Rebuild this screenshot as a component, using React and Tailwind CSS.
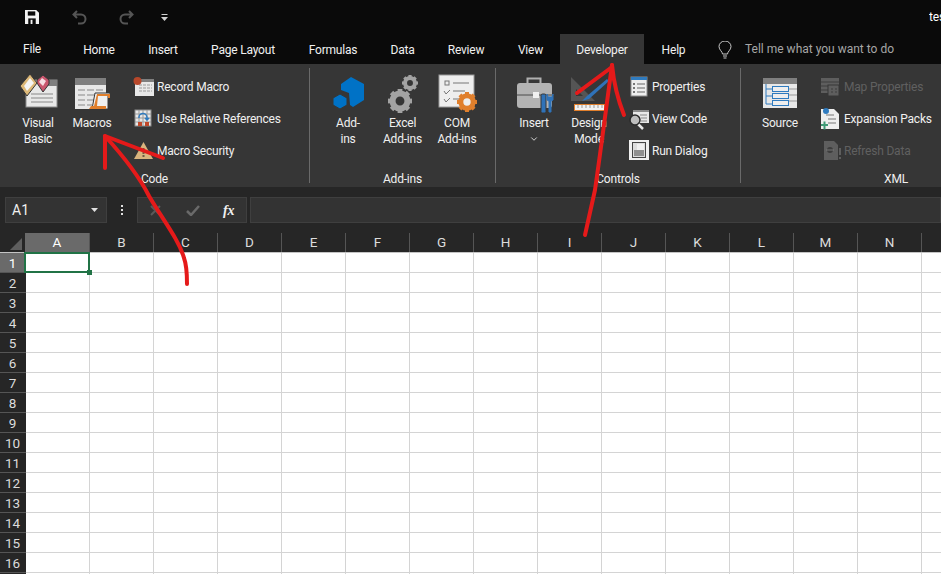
import React from 'react';
import { ChevronDown } from 'lucide-react';

const Gear = ({ cx, cy, r, fill }) => (
  <g>
    <circle cx={cx} cy={cy} r={r * 0.62} fill="none" stroke={fill} strokeWidth={r * 0.5} />
    {[0, 45, 90, 135, 180, 225, 270, 315].map(a => (
      <rect
        key={a}
        x={cx - r * 0.2}
        y={cy - r}
        width={r * 0.4}
        height={r * 0.4}
        fill={fill}
        transform={`rotate(${a} ${cx} ${cy})`}
      />
    ))}
  </g>
);

const BigSvg = ({ children }) => (
  <svg width="44" height="42" viewBox="0 0 44 42">{children}</svg>
);

const SmallSvg = ({ children }) => (
  <svg width="22" height="22" viewBox="0 0 22 22">{children}</svg>
);

const VisualBasicIcon = () => (
  <BigSvg>
    <rect x="10" y="8" width="31" height="27" fill="#e8e8e8" stroke="#8c8c8c" />
    <rect x="28" y="8" width="13" height="6" fill="#7f7f7f" />
    <path d="M15 22h22M15 26h22M15 30h22" stroke="#a8a8a8" strokeWidth="1.500" />
    <path d="M14 2l7 9-10 13-7-10z" fill="#dcb878" stroke="#363636" />
    <path d="M14 6l4 5-7 8-3-5z" fill="#f4f4f4" />
    <path d="M27 3l6 5v4l-6 8-6-9V8z" fill="#c9566e" stroke="#363636" />
    <path d="M26 6l4 3-3 5-4-4z" fill="#f5dce2" />
  </BigSvg>
);

const MacrosIcon = () => (
  <BigSvg>
    <rect x="5" y="6" width="31" height="31" fill="#e8e8e8" />
    <rect x="5" y="6" width="31" height="7" fill="#7f7f7f" />
    <path d="M8 18h25M8 23h25M8 28h16M8 33h14" stroke="#a8a8a8" strokeWidth="1.500" strokeDasharray="7 2" />
    <path d="M25 21h15v3h-2v13H22z" fill="#f0f0f0" stroke="#363636" strokeWidth="1" />
    <path d="M27 22h13v4h-2v-2h-10l-1 10h9v3H19l2-3h3z" fill="#e07f2c" />
  </BigSvg>
);

const RecordIcon = () => (
  <SmallSvg>
    <rect x="2" y="3" width="19" height="17" fill="#e8e8e8" />
    <rect x="2" y="3" width="19" height="3" fill="#7f7f7f" />
    <path d="M6 9h13M6 12h13M6 15h13" stroke="#9a9a9a" strokeDasharray="3 1" />
    <circle cx="4.500" cy="5" r="4" fill="#b7472a" />
  </SmallSvg>
);

const RelativeIcon = () => (
  <SmallSvg>
    <rect x="2" y="2" width="16" height="16" fill="#e8e8e8" stroke="#8c8c8c" />
    <path d="M6 2v16M10 2v16M14 2v16M2 6h16M2 10h16M2 14h16" stroke="#9a9a9a" />
    <rect x="5" y="14" width="4" height="4" fill="#c0482a" />
    <rect x="12" y="14" width="4" height="4" fill="#c0482a" />
    <path d="M6 10a4 4 0 0 1 8-1v3m-2-2l2 2 2-2" fill="none" stroke="#2f7bbf" strokeWidth="1.500" />
  </SmallSvg>
);

const SecurityIcon = () => (
  <SmallSvg>
    <path d="M10.500 2L20 19H1z" fill="#d8b47e" />
    <rect x="9.500" y="8" width="2" height="6" fill="#6b5a44" />
    <rect x="9.500" y="15" width="2" height="2" fill="#6b5a44" />
  </SmallSvg>
);

const AddinsIcon = () => (
  <BigSvg>
    <path d="M25 5l13 7v16l-11 7-3-2-1-12-8-3V12z" fill="#0072c6" />
    <path d="M14 22l7 4v7l-7 4-7-4v-7z" fill="#0072c6" stroke="#363636" />
  </BigSvg>
);

const ExcelAddinsIcon = () => (
  <BigSvg>
    <Gear cx={29} cy={11} r={8} fill="#a3a3a3" />
    <Gear cx={19} cy={29} r={12} fill="#a3a3a3" />
  </BigSvg>
);

const ComIcon = () => (
  <BigSvg>
    <rect x="4" y="3" width="35" height="32" fill="#eeeeee" stroke="#9a9a9a" />
    <rect x="10" y="9" width="4" height="4" fill="none" stroke="#777" />
    <path d="M18 11h16M18 19h12M18 27h8" stroke="#777" />
    <path d="M9 19l2 3 4-4M9 27l2 3 4-4" fill="none" stroke="#777" />
    <Gear cx={32} cy={30} r={10} fill="#e07f2c" />
  </BigSvg>
);

const InsertIcon = () => (
  <BigSvg>
    <path d="M15.500 11V6.500h13V11" fill="none" stroke="#b0b0b0" strokeWidth="2" />
    <rect x="5" y="11" width="35" height="25" rx="3" fill="#b3b3b3" />
    <path d="M5 23h16M27 23h13" stroke="#4a4a4a" />
    <rect x="21" y="20" width="6" height="6" fill="#f0f0f0" />
    <rect x="29" y="22" width="5" height="19" rx="1.500" fill="#2f72b8" stroke="#363636" />
    <path d="M35 22v6l2 1v11h2V29l2-1v-6l-1 3h-4z" fill="#2f72b8" stroke="#2f72b8" />
  </BigSvg>
);

const DesignIcon = () => (
  <BigSvg>
    <path d="M4 5l24 24H4zM9 17v7h7z" fill="#555" fillRule="evenodd" />
    <path d="M40 7L20 24l-5 5 7-2 20-18z" fill="#2f72b8" />
    <rect x="7.500" y="32.500" width="30" height="6" fill="#f2f2f2" stroke="#e07f2c" />
    <path d="M11 33v3M15 33v3M19 33v3M23 33v3M27 33v3M31 33v3M35 33v3" stroke="#999" />
  </BigSvg>
);

const PropertiesIcon = () => (
  <SmallSvg>
    <rect x="3" y="1" width="16" height="19" fill="#eeeeee" stroke="#8c8c8c" />
    <rect x="3" y="1" width="16" height="3" fill="#2f7bbf" />
    <path d="M9 8h8M9 12h8M9 16h8" stroke="#666" />
    <rect x="5" y="7" width="2" height="2" fill="#777" />
    <rect x="5" y="11" width="2" height="2" fill="#777" />
    <rect x="5" y="15" width="2" height="2" fill="#777" />
  </SmallSvg>
);

const ViewCodeIcon = () => (
  <SmallSvg>
    <rect x="5" y="2" width="16" height="13" fill="#e8e8e8" />
    <rect x="5" y="2" width="16" height="2" fill="#8c8c8c" />
    <path d="M12 7h7M13 10h6M13 13h6" stroke="#888" />
    <path d="M10 16l5 5" stroke="#e8e8e8" strokeWidth="2.500" />
    <circle cx="7" cy="12" r="5" fill="#bdbdbd" stroke="#2a2a2a" strokeWidth="1.500" />
  </SmallSvg>
);

const RunDialogIcon = () => (
  <SmallSvg>
    <rect x="1" y="0" width="20" height="20" fill="#efefef" />
    <rect x="4.500" y="2.500" width="13" height="15" fill="#dcdcdc" stroke="#444" />
    <rect x="9" y="4" width="7" height="6" fill="#efefef" />
    <rect x="6" y="10" width="10" height="6" fill="#8f8f8f" />
  </SmallSvg>
);

const SourceIcon = () => (
  <BigSvg>
    <rect x="5" y="6" width="34" height="30" fill="#e8e8e8" />
    <rect x="5" y="6" width="34" height="6" fill="#7f7f7f" />
    <path d="M31 17h8M31 23h8M31 29h8" stroke="#999" />
    <path d="M8 12v20h6M8 17h6M8 24h6" fill="none" stroke="#2f7bbf" />
    <rect x="14.500" y="14.500" width="16" height="5" fill="#eeeeee" stroke="#2f7bbf" />
    <rect x="14.500" y="21.500" width="16" height="5" fill="#eeeeee" stroke="#2f7bbf" />
    <rect x="14.500" y="28.500" width="16" height="5" fill="#eeeeee" stroke="#2f7bbf" />
  </BigSvg>
);

const MapPropsIcon = () => (
  <SmallSvg>
    <rect x="1" y="2" width="18" height="15" fill="#5e5e5e" />
    <path d="M1 6h18M1 10h8M1 14h8" stroke="#3d3d3d" />
    <rect x="8" y="9" width="11" height="11" fill="#5e5e5e" stroke="#363636" />
    <path d="M11 13h2M15 13h2M11 16h2M15 16h2" stroke="#3d3d3d" />
  </SmallSvg>
);

const ExpansionIcon = () => (
  <SmallSvg>
    <path d="M1 1h13l5 5v15H1z" fill="#eeeeee" />
    <path d="M6 7h8M8 11h8M8 15h8" stroke="#777" />
    <circle cx="6" cy="3" r="3" fill="#2f7bbf" />
    <path d="M1 17h7M4.500 13.500v8" stroke="#3f9a76" strokeWidth="2" />
  </SmallSvg>
);

const RefreshIcon = () => (
  <SmallSvg>
    <path d="M4 1h10l4 4v15H4z" fill="#5e5e5e" />
    <circle cx="10" cy="10" r="3" fill="#3d3d3d" />
    <path d="M6 10h8" stroke="#777" />
    <rect x="19" y="8" width="2" height="7" fill="#5e5e5e" />
    <rect x="19" y="17" width="2" height="2" fill="#5e5e5e" />
  </SmallSvg>
);

const BigBtn = ({ icon, lines, className }) => (
  <div className={`flex flex-col items-center text-[#f0f0f0] leading-[16px] ${className}`}>
    <div className="h-[43px] flex justify-center">{icon}</div>
    {lines.map(l => (
      <div key={l} className="whitespace-nowrap">{l}</div>
    ))}
  </div>
);

const SmallBtn = ({ icon, label, dim }) => (
  <div className={`h-8 flex items-center whitespace-nowrap ${dim ? 'text-[#606060]' : 'text-[#f0f0f0]'}`}>
    <div className="w-6 shrink-0 flex">{icon}</div>
    {label}
  </div>
);

const Group = ({ label, className, pad, last, children }) => (
  <div className={`shrink-0 h-full flex ${className}`}>
    <div className="flex-1 flex flex-col">
      <div className={`flex-1 flex pt-2 ${pad}`}>{children}</div>
      <div className="h-4 text-center text-[#f0f0f0] leading-[16px]">{label}</div>
    </div>
    {!last && <div className="w-px my-1 bg-[#6a6a6a]" />}
  </div>
);

const tabs = [
  ['Home', 'w-[66px]'],
  ['Insert', 'w-[62px]'],
  ['Page Layout', 'w-[98px]'],
  ['Formulas', 'w-[82px]'],
  ['Data', 'w-[57px]'],
  ['Review', 'w-[70px]'],
  ['View', 'w-[59px]'],
];

const columns = ['A', 'B', 'C', 'D', 'E', 'F', 'G', 'H', 'I', 'J', 'K', 'L', 'M', 'N', 'O'];
const rows = Array.from({ length: 17 }, (_, i) => i + 1);

export default function App() {
  return (
    <div className="relative w-[941px] h-[574px] overflow-hidden bg-white text-[12px] tracking-[-0.2px] font-['Roboto',sans-serif]">
      {/* Title bar */}
      <div className="h-[34px] bg-[#0a0a0a] flex items-center text-white">
        <div className="w-[72px] pl-[25px] flex">
          <svg width="14" height="14" viewBox="0 0 15 15">
            <path d="M0 0h12l3 3v12H0z" fill="#f2f2f2" />
            <rect x="3" y="1.500" width="8" height="4.500" fill="#0a0a0a" />
            <rect x="3.500" y="9" width="8" height="6" fill="#0a0a0a" />
            <rect x="6" y="10.500" width="2" height="4.500" fill="#f2f2f2" />
          </svg>
        </div>
        <div className="w-[47px] flex">
          <svg width="15" height="15" viewBox="0 0 15 15" fill="none" stroke="#555" strokeWidth="2">
            <path d="M5 1L1.500 4.500 5 8M2 4.500h7a4.500 4.500 0 0 1 0 9H6" />
          </svg>
        </div>
        <div className="w-[42px] flex">
          <svg width="15" height="15" viewBox="0 0 15 15" fill="none" stroke="#555" strokeWidth="2">
            <path d="M10 1l3.500 3.500L10 8M13 4.500H6a4.500 4.500 0 0 0 0 9h3" />
          </svg>
        </div>
        <svg width="7" height="7" viewBox="0 0 7 7" fill="#d0d0d0">
          <rect x="0.500" y="0" width="6" height="1" />
          <path d="M0 3h7L3.500 7z" />
        </svg>
        <div className="ml-auto w-[12px] overflow-hidden whitespace-nowrap">test</div>
      </div>

      {/* Tabs */}
      <div className="h-[30px] bg-[#0a0a0a] flex items-stretch text-[#f0f0f0]">
        <div className="w-[66px] pl-[23px] pt-[6px] leading-[18px]">File</div>
        {tabs.map(([name, w]) => (
          <div key={name} className={`${w} text-center pt-[7px] leading-[18px]`}>{name}</div>
        ))}
        <div className="w-[84px] bg-[#363636] text-center pt-[7px] leading-[18px]">Developer</div>
        <div className="w-[59px] text-center pt-[7px] leading-[18px]">Help</div>
        <div className="ml-[15px] pt-[7px]">
          <svg width="14" height="18" viewBox="0 0 14 18" fill="none" stroke="#c8c8c8">
            <path d="M4.500 13c0-2.500-3.500-4-3.500-7.500a6 5.500 0 0 1 12 0C13 9 9.500 10.500 9.500 13z" />
            <path d="M5 15h4M5.500 17h3" />
          </svg>
        </div>
        <div className="ml-[13px] pt-[6px] leading-[18px] tracking-normal text-[#a6a6a6] whitespace-nowrap">Tell me what you want to do</div>
      </div>

      {/* Ribbon */}
      <div className="h-[123px] bg-[#363636] flex">
        <Group label="Code" className="w-[310px]" pad="pl-[11px]">
          <BigBtn icon={<VisualBasicIcon />} lines={['Visual', 'Basic']} className="w-[54px]" />
          <BigBtn icon={<MacrosIcon />} lines={['Macros']} className="w-[54px]" />
          <div className="ml-[14px] -mt-[1px]">
            <SmallBtn icon={<RecordIcon />} label="Record Macro" />
            <SmallBtn icon={<RelativeIcon />} label="Use Relative References" />
            <SmallBtn icon={<SecurityIcon />} label="Macro Security" />
          </div>
        </Group>
        <Group label="Add-ins" className="w-[186px]" pad="pl-[11px]">
          <BigBtn icon={<AddinsIcon />} lines={['Add-', 'ins']} className="w-[54px]" />
          <BigBtn icon={<ExcelAddinsIcon />} lines={['Excel', 'Add-ins']} className="w-[55px]" />
          <BigBtn icon={<ComIcon />} lines={['COM', 'Add-ins']} className="w-[54px]" />
        </Group>
        <Group label="Controls" className="w-[245px]" pad="pl-[11px]">
          <BigBtn
            icon={<InsertIcon />}
            lines={['Insert', <ChevronDown key="chev" size={10} className="mt-[3px]" />]}
            className="w-[54px]"
          />
          <BigBtn icon={<DesignIcon />} lines={['Design', 'Mode']} className="w-[56px]" />
          <div className="ml-[11px] -mt-[1px]">
            <SmallBtn icon={<PropertiesIcon />} label="Properties" />
            <SmallBtn icon={<ViewCodeIcon />} label="View Code" />
            <SmallBtn icon={<RunDialogIcon />} label="Run Dialog" />
          </div>
        </Group>
        <Group label="XML" className="w-[310px]" pad="pl-[12px]" last>
          <BigBtn icon={<SourceIcon />} lines={['Source']} className="w-[54px]" />
          <div className="ml-[13px] -mt-[1px]">
            <SmallBtn icon={<MapPropsIcon />} label="Map Properties" dim />
            <SmallBtn icon={<ExpansionIcon />} label="Expansion Packs" />
            <SmallBtn icon={<RefreshIcon />} label="Refresh Data" dim />
          </div>
        </Group>
      </div>

      {/* Formula bar */}
      <div className="h-[46px] bg-[#262626] pt-[10px] pl-[5px] flex items-start">
        <div className="w-[102px] h-[26px] bg-[#333333] border border-[#3f3f3f] flex items-center justify-between pl-[6px] pr-[8px] text-[#f0f0f0] text-[14px] tracking-normal">
          A1
          <svg width="7" height="4" viewBox="0 0 7 4" fill="#e0e0e0"><path d="M0 0h7L3.500 4z" /></svg>
        </div>
        <div className="w-[30px] h-[26px] flex flex-col items-center justify-center gap-[2px]">
          <div className="w-[2px] h-[2px] bg-[#e0e0e0]" />
          <div className="w-[2px] h-[2px] bg-[#e0e0e0]" />
          <div className="w-[2px] h-[2px] bg-[#e0e0e0]" />
        </div>
        <div className="w-[110px] h-[26px] bg-[#333333] border border-[#3f3f3f] flex items-center text-[#666]">
          <svg className="ml-[12px]" width="11" height="11" viewBox="0 0 11 11" fill="none" stroke="#5a5a5a" strokeWidth="2">
            <path d="M1 1l9 9M10 1l-9 9" />
          </svg>
          <svg className="ml-[25px]" width="14" height="11" viewBox="0 0 14 11" fill="none" stroke="#6a6a6a" strokeWidth="2.500">
            <path d="M1 6l4 4 8-9" />
          </svg>
          <div className="ml-[23px] text-[#f0f0f0] text-[14px] font-bold italic font-['Liberation_Serif',serif]">fx</div>
        </div>
        <div className="ml-[3px] flex-1 h-[26px] bg-[#333333] border border-[#3f3f3f]" />
      </div>

      {/* Column headers */}
      <div className="h-[20px] bg-[#262626] flex border-b border-[#c4c4c4] text-[13.500px] tracking-normal text-[#dcdcdc]">
        <div className="w-[26px] shrink-0 flex items-end justify-end pb-[2px] pr-[4px]">
          <svg width="12" height="12" viewBox="0 0 12 12" fill="#5e5e5e"><path d="M12 0v12H0z" /></svg>
        </div>
        {columns.map((c, i) => (
          <div
            key={c}
            className={`w-16 shrink-0 border-r border-[#555] flex items-center justify-center leading-[19px] ${i === 0 ? 'bg-[#6a6a6a] text-white -ml-[1px] w-[65px]' : ''}`}
          >
            {c}
          </div>
        ))}
      </div>

      {/* Sheet */}
      {rows.map(r => (
        <div key={r} className="h-5 flex">
          <div
            className={`w-[26px] shrink-0 pr-[1px] border-b border-[#555] text-[13.500px] tracking-normal text-center leading-[21px] ${r === 1 ? 'bg-[#6a6a6a] text-white' : 'bg-[#262626] text-[#dcdcdc]'}`}
          >
            {r}
          </div>
          {columns.map(c => (
            <div key={c} className="relative w-16 shrink-0 border-r border-b border-[#d4d4d4]">
              {r === 1 && c === 'A' && (
                <>
                  <div className="absolute z-10 -left-[2px] -top-[1px] w-[66px] h-[21px] border-2 border-[#217346]" />
                  <div className="absolute z-10 -right-[3px] -bottom-[3px] w-[5px] h-[5px] bg-[#217346]" />
                </>
              )}
            </div>
          ))}
        </div>
      ))}

      {/* Hand-drawn red arrows */}
      <svg className="absolute inset-0 z-20 pointer-events-none" width="941" height="574" viewBox="0 0 941 574" fill="none" stroke="#e51a1a" strokeWidth="4" strokeLinecap="round" strokeLinejoin="round">
        <path d="M105 168V136l58 22" />
        <path d="M105 136c20 22 34 40 44 60 14 24 30 44 35 62 3 8 3 16 3 26" />
        <path d="M577 93l35-26" />
        <path d="M612 65c-6 44-11 84-17 125l-10 45" />
        <path d="M612 65c2 20 6 35 12 50" />
      </svg>
    </div>
  );
}
